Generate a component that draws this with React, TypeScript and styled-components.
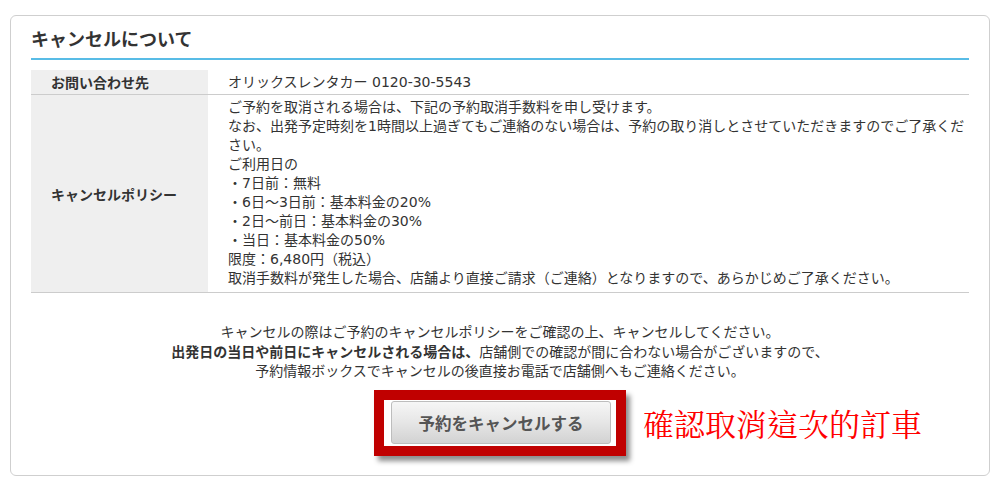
import React from 'react';
import styled, { createGlobalStyle } from 'styled-components';

const GlobalStyle = createGlobalStyle`
  html, body {
    margin: 0;
    padding: 0;
    background: #fff;
  }
  body {
    font-family: "DejaVu Sans", "Noto Sans CJK JP", sans-serif;
    color: #333;
  }
`;

const Card = styled.section`
  box-sizing: border-box;
  width: 980px;
  margin: 15px 0 0 10px;
  padding: 10px 20px 19px;
  border: 1px solid #cfcfcf;
  border-radius: 6px;
  background: #fff;
`;

const Title = styled.h2`
  margin: 0;
  padding-bottom: 8px;
  border-bottom: 2px solid #58bce6;
  font-family: "Noto Sans CJK JP", sans-serif;
  font-size: 18px;
  line-height: 24px;
  font-weight: 700;
  color: #333;
`;

const Table = styled.table`
  width: 100%;
  margin-top: 10px;
  border-collapse: collapse;
  font-size: 14px;
  line-height: 19px;
`;

const Row = styled.tr`
  border-bottom: 1px solid #cccccc;
`;

const HeadCell = styled.th`
  width: 177px;
  box-sizing: border-box;
  padding: 3px 0 2px 20px;
  background: #efefef;
  text-align: left;
  font-family: "Noto Sans CJK JP", sans-serif;
  font-weight: 700;
  vertical-align: middle;
  white-space: nowrap;
`;

const DataCell = styled.td<{ tall?: boolean }>`
  padding: ${p => (p.tall ? '3px 0 4px 20px' : '3px 0 2px 20px')};
  vertical-align: middle;
`;

const Notice = styled.div`
  margin-top: 30px;
  text-align: center;
  font-size: 14px;
  line-height: 19px;

  strong {
    font-family: "Noto Sans CJK JP", sans-serif;
    font-weight: 700;
  }
`;

const ActionRow = styled.div`
  display: flex;
  justify-content: center;
  margin-top: 9px;
`;

const Highlight = styled.div`
  position: relative;
  padding: 1px 5px 2px 7px;
  border: 10px solid #c00000;
  background: #fff;
  box-shadow: 4px 5px 5px rgba(0, 0, 0, 0.45);
`;

const CancelButton = styled.button`
  display: block;
  width: 220px;
  height: 43px;
  padding: 0;
  border: 1px solid #bdbdbd;
  border-radius: 3px;
  background: linear-gradient(to bottom, #f6f6f6 0%, #e6e6e6 50%, #d2d2d2 100%);
  font-family: "Noto Sans CJK JP", sans-serif;
  font-size: 16.5px;
  font-weight: 700;
  color: #555;
  cursor: pointer;
`;

const Annotation = styled.span`
  position: absolute;
  left: calc(100% + 27px);
  top: 50%;
  transform: translateY(-50%);
  font-family: "Noto Serif CJK TC", "Noto Sans CJK TC", serif;
  font-size: 31px;
  line-height: 34px;
  font-weight: 400;
  color: #ff0000;
  white-space: nowrap;
`;

const policyLines = [
  'ご予約を取消される場合は、下記の予約取消手数料を申し受けます。',
  'なお、出発予定時刻を1時間以上過ぎてもご連絡のない場合は、予約の取り消しとさせていただきますのでご了承ください。',
  'ご利用日の',
  '・7日前：無料',
  '・6日～3日前：基本料金の20%',
  '・2日～前日：基本料金の30%',
  '・当日：基本料金の50%',
  '限度：6,480円（税込）',
  '取消手数料が発生した場合、店舗より直接ご請求（ご連絡）となりますので、あらかじめご了承ください。',
];

const App: React.FC = () => {
  return (
    <>
      <GlobalStyle />
      <Card>
        <Title>キャンセルについて</Title>
        <Table>
          <tbody>
            <Row>
              <HeadCell>お問い合わせ先</HeadCell>
              <DataCell>オリックスレンタカー 0120-30-5543</DataCell>
            </Row>
            <Row>
              <HeadCell>キャンセルポリシー</HeadCell>
              <DataCell tall>
                {policyLines.map((line, i) => (
                  <div key={i}>{line}</div>
                ))}
              </DataCell>
            </Row>
          </tbody>
        </Table>

        <Notice>
          キャンセルの際はご予約のキャンセルポリシーをご確認の上、キャンセルしてください。
          <br />
          <strong>出発日の当日や前日にキャンセルされる場合は、</strong>
          店舗側での確認が間に合わない場合がございますので、
          <br />
          予約情報ボックスでキャンセルの後直接お電話で店舗側へもご連絡ください。
        </Notice>

        <ActionRow>
          <Highlight>
            <CancelButton type="button">予約をキャンセルする</CancelButton>
            <Annotation>確認取消這次的訂車</Annotation>
          </Highlight>
        </ActionRow>
      </Card>
    </>
  );
};

export default App;
